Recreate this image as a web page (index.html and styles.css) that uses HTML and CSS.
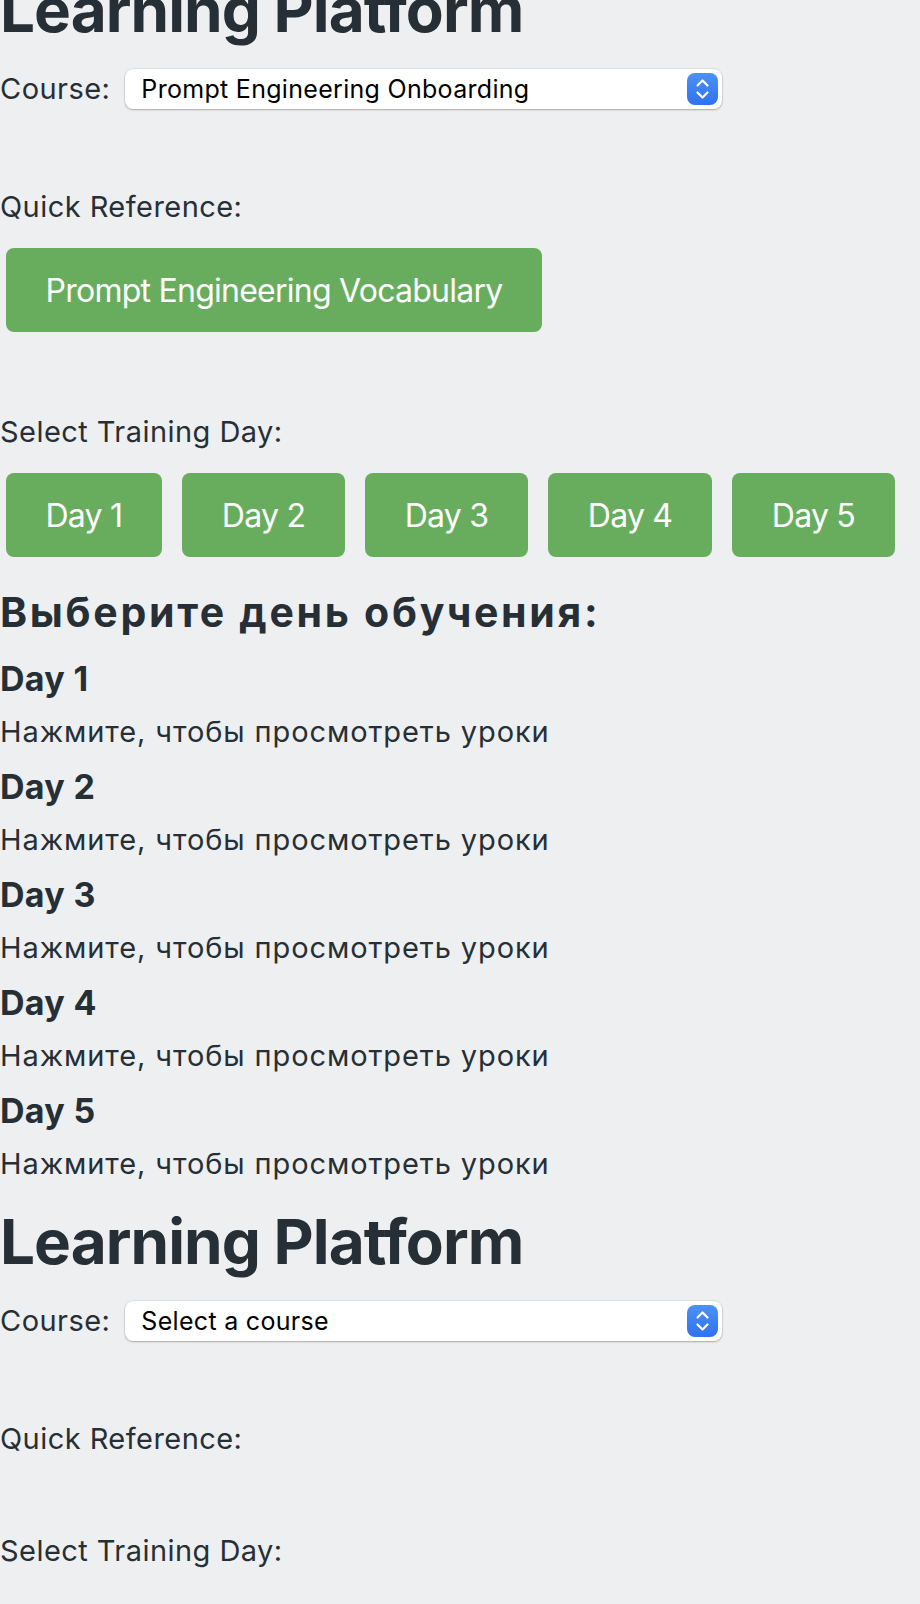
FILE: index.html
```html
<!DOCTYPE html>
<html lang="en">
<head>
<meta charset="utf-8">
<title>Learning Platform</title>
<link rel="stylesheet" href="styles.css">
</head>
<body>
<div class="page">
  <section class="app app-first">
    <h1 class="title">Learning Platform</h1>
    <div class="course-row">
      <label class="label" for="c1">Course:</label>
      <div class="select-box">
        <select id="c1" class="select">
          <option>Prompt Engineering Onboarding</option>
        </select>
        <span class="stepper"><svg width="31" height="32" viewBox="0 0 31 32"><path d="M10.5 12.5 L15.5 7.5 L20.5 12.5 M10.5 19.5 L15.5 24.5 L20.5 19.5" fill="none" stroke="#fff" stroke-width="2.2" stroke-linecap="round" stroke-linejoin="round"/></svg></span>
      </div>
    </div>
    <div class="block">
      <p class="label">Quick Reference:</p>
      <div class="btn-row"><button class="btn">Prompt Engineering Vocabulary</button></div>
    </div>
    <div class="block">
      <p class="label">Select Training Day:</p>
      <div class="btn-row"><button class="btn">Day 1</button><button class="btn">Day 2</button><button class="btn">Day 3</button><button class="btn">Day 4</button><button class="btn">Day 5</button></div>
    </div>
    <div class="days">
      <h2 class="days-title">Выберите день обучения:</h2>
      <div class="day"><h3 class="day-name">Day 1</h3><p class="day-hint">Нажмите, чтобы просмотреть уроки</p></div>
      <div class="day"><h3 class="day-name">Day 2</h3><p class="day-hint">Нажмите, чтобы просмотреть уроки</p></div>
      <div class="day"><h3 class="day-name">Day 3</h3><p class="day-hint">Нажмите, чтобы просмотреть уроки</p></div>
      <div class="day"><h3 class="day-name">Day 4</h3><p class="day-hint">Нажмите, чтобы просмотреть уроки</p></div>
      <div class="day"><h3 class="day-name">Day 5</h3><p class="day-hint">Нажмите, чтобы просмотреть уроки</p></div>
    </div>
  </section>
  <section class="app app-second">
    <h1 class="title">Learning Platform</h1>
    <div class="course-row">
      <label class="label" for="c2">Course:</label>
      <div class="select-box">
        <select id="c2" class="select">
          <option>Select a course</option>
        </select>
        <span class="stepper"><svg width="31" height="32" viewBox="0 0 31 32"><path d="M10.5 12.5 L15.5 7.5 L20.5 12.5 M10.5 19.5 L15.5 24.5 L20.5 19.5" fill="none" stroke="#fff" stroke-width="2.2" stroke-linecap="round" stroke-linejoin="round"/></svg></span>
      </div>
    </div>
    <div class="block">
      <p class="label">Quick Reference:</p>
    </div>
    <div class="block">
      <p class="label">Select Training Day:</p>
    </div>
  </section>
</div>
</body>
</html>
```

FILE: styles.css
```css
html, body {
  margin: 0;
  padding: 0;
  background: #eeeff1;
}
body {
  font-family: Inter, "Noto Sans", sans-serif;
  color: #272f36;
  overflow: hidden;
}
.page {
  margin-top: -28px;
}
.title {
  margin: 0;
  font-size: 62px;
  line-height: 76px;
  font-weight: 700;
  letter-spacing: -0.95px;
}
.app-second .title {
  margin-top: 22px;
}
.course-row {
  display: flex;
  align-items: center;
  margin-top: 21px;
  height: 40px;
}
.label {
  margin: 0;
  font-size: 29px;
  line-height: 36px;
  letter-spacing: 0.45px;
}
.course-row .label {
  margin-right: 15px;
}
.select-box {
  display: flex;
  align-items: center;
  width: 597px;
  height: 40px;
  box-sizing: border-box;
  background: #fff;
  border-radius: 8px;
  box-shadow: 0 0 0 0.5px rgba(0,0,0,0.12), 0 1px 2px rgba(0,0,0,0.25);
  padding: 0 4px 0 16px;
}
.select {
  flex: 1;
  appearance: none;
  -webkit-appearance: none;
  border: 0;
  background: transparent;
  font-family: Inter, "Noto Sans", sans-serif;
  font-size: 25px;
  letter-spacing: 0.3px;
  color: #000;
  padding: 0;
  outline: none;
}
.stepper {
  display: flex;
  width: 31px;
  height: 32px;
  border-radius: 8px;
  background: linear-gradient(#4d90f9, #2f72ee);
}
.block {
  margin-top: 80px;
}
.block + .block {
  margin-top: 76px;
}
.btn-row {
  display: flex;
  gap: 8.5px;
  margin-top: 17px;
}
.btn {
  margin: 6px;
  height: 84px;
  padding: 0 39.5px;
  border: 0;
  border-radius: 8px;
  background: #68ad5e;
  color: #fff;
  font-family: Inter, "Noto Sans", sans-serif;
  font-size: 32px;
  letter-spacing: -0.75px;
}
.days {
  margin-top: 24px;
}
.days-title {
  margin: 0 0 21px;
  font-size: 41px;
  line-height: 50px;
  font-weight: 700;
  letter-spacing: 2.7px;
}
.day-name {
  margin: 0;
  font-size: 34px;
  line-height: 42px;
  font-weight: 700;
  letter-spacing: 0.3px;
}
.day-hint {
  margin: 14px 0 16px;
  font-size: 29px;
  line-height: 36px;
  letter-spacing: 0.9px;
}
.day:last-child .day-hint {
  margin-bottom: 0;
}
```
